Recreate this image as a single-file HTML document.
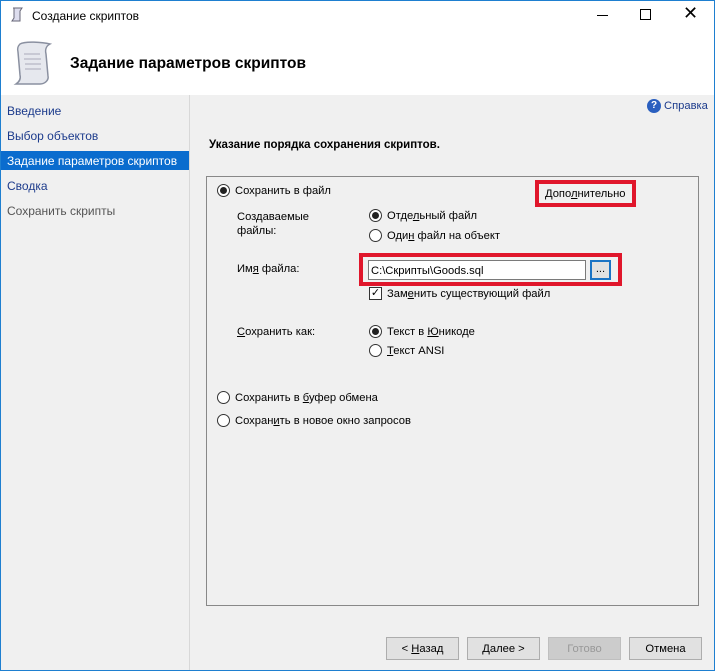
<!DOCTYPE html>
<html><head><meta charset="utf-8"><style>
*{margin:0;padding:0;box-sizing:border-box}
body{width:715px;height:671px;overflow:hidden;background:#f0f0f0;font:11.2px "Liberation Sans","DejaVu Sans",sans-serif;color:#000;position:relative}
.a{position:absolute;white-space:nowrap}
.t{margin-top:1px}
.n{font-size:12px}
.rad{position:absolute;width:13px;height:13px;border:1px solid #333;border-radius:50%;background:#fff}
.rad.on::after{content:"";position:absolute;left:2px;top:2px;width:7px;height:7px;border-radius:50%;background:#222}
.btn{position:absolute;height:23px;border:1px solid #adadad;background:#e1e1e1;text-align:center;line-height:22px}
u{text-decoration:underline}
</style></head><body>
<div class="a" style="left:0;top:0;width:715px;height:95px;background:#fff"></div>
<div class="a" style="left:0;top:0;width:715px;height:671px;border:1px solid #1e7fd0;z-index:10"></div>
<svg class="a" style="left:9px;top:6px" width="16" height="18" viewBox="0 0 16 18"><path d="M4 2h9l-2 3v10H3l2-3V2z" fill="#dde" stroke="#667" stroke-width="1"/></svg>
<div class="a n" style="left:32px;top:9px">Создание скриптов</div>
<div class="a" style="left:597px;top:15px;width:11px;height:1px;background:#000"></div>
<div class="a" style="left:640px;top:9px;width:11px;height:11px;border:1px solid #000"></div>
<div class="a" style="left:683px;top:3px;font-size:18px;font-weight:200">✕</div>
<svg class="a" style="left:10px;top:40px" width="45" height="48" viewBox="0 0 45 48"><path d="M10 4c5-3 22-2 30 0-4 2-5 6-4 10l2 22c1 4-3 8-8 8H6c3-2 5-5 4-9L8 12c-1-4 0-6 2-8z" fill="#e6e8ee" stroke="#8a90a0" stroke-width="1.5"/><path d="M14 14h16M14 19h17M15 24h16M15 29h16" stroke="#aab" /></svg>
<div class="a" style="left:70px;top:55px;font-size:15.5px;font-weight:bold">Задание параметров скриптов</div>
<div class="a" style="left:189px;top:95px;width:1px;height:576px;background:#d8d8d8"></div>
<div class="a n" style="left:7px;top:104px;color:#1c3b8c">Введение</div>
<div class="a n" style="left:7px;top:129px;color:#1c3b8c">Выбор объектов</div>
<div class="a" style="left:0;top:151px;width:189px;height:19px;background:#0a6cce"></div>
<div class="a n" style="left:7px;top:154px;color:#fff">Задание параметров скриптов</div>
<div class="a n" style="left:7px;top:179px;color:#1c3b8c">Сводка</div>
<div class="a n" style="left:7px;top:204px;color:#555">Сохранить скрипты</div>
<div class="a" style="left:647px;top:99px;width:14px;height:14px;border-radius:50%;background:#2a5fbf;color:#fff;font-size:10px;font-weight:bold;text-align:center;line-height:14px">?</div>
<div class="a t" style="left:664px;top:99px;color:#1c3b8c">Справка</div>
<div class="a t" style="left:209px;top:138px;font-weight:bold;font-size:11.5px">Указание порядка сохранения скриптов.</div>
<div class="a" style="left:206px;top:176px;width:493px;height:430px;border:1px solid #888;background:#f0f0f0"></div>
<div class="rad on" style="left:217px;top:184px"></div><div class="a t" style="left:235px;top:184px">Сохранить в файл</div>
<div class="a" style="left:535px;top:180px;width:101px;height:27px;border:4px solid #e0162b"></div>
<div class="a t" style="left:545px;top:187px">Допо<u>л</u>нительно</div>
<div class="a t" style="left:237px;top:209px;line-height:14px">Создаваемые<br>файлы:</div>
<div class="rad on" style="left:369px;top:209px"></div><div class="a t" style="left:387px;top:209px">Отде<u>л</u>ьный файл</div>
<div class="rad" style="left:369px;top:229px"></div><div class="a t" style="left:387px;top:229px">Оди<u>н</u> файл на объект</div>
<div class="a t" style="left:237px;top:262px">Им<u>я</u> файла:</div>
<div class="a" style="left:359px;top:253px;width:263px;height:33px;border:4px solid #e0162b"></div>
<div class="a" style="left:368px;top:260px;width:218px;height:20px;border:1px solid #7a7a7a;background:#fff;padding:3px 2px;line-height:14px">C:\Скрипты\Goods.sql</div>
<div class="a" style="left:590px;top:260px;width:21px;height:20px;border:2px solid #1a73c4;background:#e1e1e1;text-align:center;line-height:14px">...</div>
<div class="a" style="left:369px;top:287px;width:13px;height:13px;border:1px solid #333;background:#fff;font-size:11px;line-height:11px;text-align:center">✓</div>
<div class="a t" style="left:387px;top:287px">Зам<u>е</u>нить существующий файл</div>
<div class="a t" style="left:237px;top:325px"><u>С</u>охранить как:</div>
<div class="rad on" style="left:369px;top:325px"></div><div class="a t" style="left:387px;top:325px">Текст в <u>Ю</u>никоде</div>
<div class="rad" style="left:369px;top:344px"></div><div class="a t" style="left:387px;top:344px"><u>Т</u>екст ANSI</div>
<div class="rad" style="left:217px;top:391px"></div><div class="a t" style="left:235px;top:391px">Сохранить в <u>б</u>уфер обмена</div>
<div class="rad" style="left:217px;top:414px"></div><div class="a t" style="left:235px;top:414px">Сохран<u>и</u>ть в новое окно запросов</div>
<div class="btn" style="left:386px;top:637px;width:73px">&lt; <u>Н</u>азад</div>
<div class="btn" style="left:467px;top:637px;width:73px"><u>Д</u>алее &gt;</div>
<div class="btn" style="left:548px;top:637px;width:73px;background:#ccc;border-color:#bfbfbf;color:#999">Готово</div>
<div class="btn" style="left:629px;top:637px;width:73px">Отмена</div>
</body></html>
